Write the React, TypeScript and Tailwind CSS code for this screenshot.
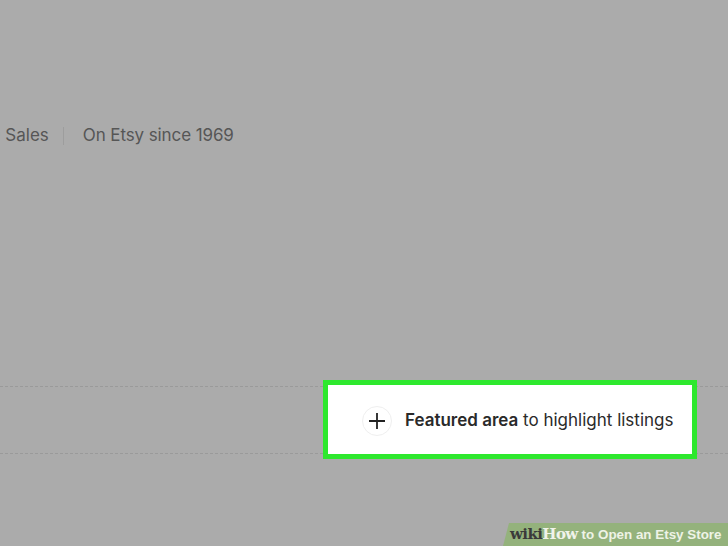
import React from "react";

const App = () => {
  return (
    <div className="relative w-[728px] h-[546px] overflow-hidden bg-[#ababab] font-['Inter',sans-serif]">
      {/* ---- shop stats ---- */}
      <div className="pt-[123px] flex items-center text-[17px] text-[#565656] -ml-[10px]">
        <span>9 Sales</span>
        <span className="ml-[14px] mr-[19px] w-px h-[18px] bg-[#9d9d9d]" />
        <span className="tracking-[-0.1px]">On Etsy since 1969</span>
      </div>

      {/* ---- featured area row ---- */}
      <div className="mt-[237px] relative">
        <div className="border-t border-dashed border-[#9a9a9a]" />
        <div className="flex justify-end pr-[31px] -mt-[7px]">
          <div className="w-[374px] h-[79px] border-[5px] border-[#2ee82e] bg-white flex items-center pl-[34px] pt-[3px]">
            <div className="w-[30px] h-[30px] rounded-full border border-[#efefef] flex items-center justify-center">
              <svg width="18" height="18" viewBox="0 0 18 18">
                <path d="M9 1v16M1 9h16" stroke="#222" strokeWidth="1.8" />
              </svg>
            </div>
            <span className="ml-[13px] text-[17px] text-[#2a2a2a]">
              <b className="font-semibold">Featured area</b> to highlight listings
            </span>
          </div>
        </div>
        <div className="-mt-[6px] border-t border-dashed border-[#9a9a9a]" />
      </div>

      {/* ---- wikiHow watermark ---- */}
      <div className="absolute right-0 bottom-0 w-[225px] h-[23px] bg-[#94b27c] [clip-path:polygon(6px_0,100%_0,100%_100%,0_100%)] flex items-center pl-[7px] font-bold leading-none whitespace-nowrap">
        <span className="font-['DejaVu_Serif',serif] text-[15px] text-[#3a3a3a] tracking-[-0.6px]">wiki</span>
        <span className="font-['DejaVu_Serif',serif] text-[15px] text-[#f0f3ea] tracking-[-0.6px]">How</span>
        <span className="ml-[4px] font-['Liberation_Sans',sans-serif] text-[#eef3e6] text-[13.4px]">to Open an Etsy Store</span>
      </div>
    </div>
  );
};

export default App;
